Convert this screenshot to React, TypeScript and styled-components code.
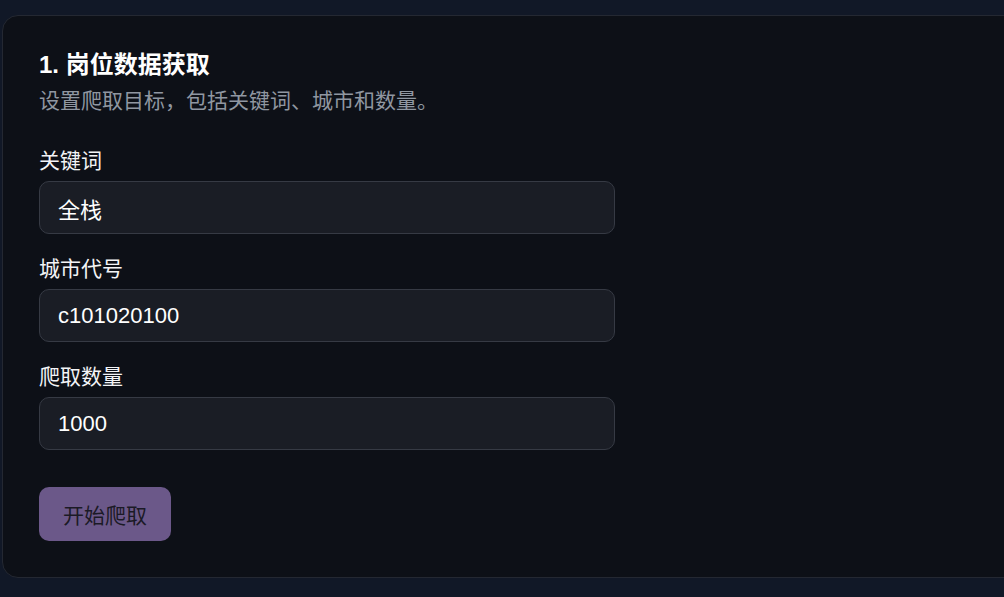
import styled, { createGlobalStyle } from 'styled-components';

const GlobalStyle = createGlobalStyle`
  html, body {
    margin: 0;
    padding: 0;
    background: #111827;
    overflow: hidden;
  }

  body {
    font-family: "Liberation Sans", "Noto Sans CJK SC", sans-serif;
    color: #f3f4f6;
  }
`;

const Page = styled.div`
  min-height: 597px;
  padding: 15px 0 0 2px;
  box-sizing: border-box;
`;

const Card = styled.section`
  width: 1040px;
  box-sizing: border-box;
  padding: 36px;
  background-color: #0d1017;
  border: 1px solid #242832;
  border-radius: 16px;
  display: flex;
  flex-direction: column;
`;

const Header = styled.header`
  display: flex;
  flex-direction: column;
  gap: 8px;
  margin-bottom: 31px;
`;

const Title = styled.h2`
  margin: 0;
  font-size: 24px;
  line-height: 26px;
  font-weight: 700;
  color: #ffffff;
`;

const Description = styled.p`
  margin: 0;
  font-size: 21px;
  line-height: 30px;
  color: #9097a1;
`;

const Fields = styled.div`
  display: flex;
  flex-direction: column;
  gap: 21px;
  width: 576px;
`;

const Field = styled.label`
  display: flex;
  flex-direction: column;
  gap: 6px;
`;

const Label = styled.span`
  font-size: 21px;
  line-height: 28px;
  color: #f3f4f6;
`;

const Input = styled.input`
  height: 53px;
  box-sizing: border-box;
  padding: 0 18px;
  font-family: "Liberation Sans", "Noto Sans CJK SC", sans-serif;
  font-size: 22px;
  color: #ffffff;
  background-color: #1a1d25;
  border: 1px solid #363a44;
  border-radius: 10px;
  outline: none;
`;

const Actions = styled.div`
  margin-top: 37px;
  display: flex;
`;

const Button = styled.button`
  height: 54px;
  padding: 0 24px;
  font-family: "Liberation Sans", "Noto Sans CJK SC", sans-serif;
  font-size: 21px;
  color: #1b1a26;
  background-color: #6b5889;
  border: none;
  border-radius: 10px;
  cursor: not-allowed;
`;

const fields = [
  { label: '关键词', value: '全栈' },
  { label: '城市代号', value: 'c101020100' },
  { label: '爬取数量', value: '1000' },
];

export default function App() {
  return (
    <>
      <GlobalStyle />
      <Page>
        <Card>
          <Header>
            <Title>1. 岗位数据获取</Title>
            <Description>设置爬取目标，包括关键词、城市和数量。</Description>
          </Header>
          <Fields>
            {fields.map((f) => (
              <Field key={f.label}>
                <Label>{f.label}</Label>
                <Input defaultValue={f.value} />
              </Field>
            ))}
          </Fields>
          <Actions>
            <Button disabled>开始爬取</Button>
          </Actions>
        </Card>
      </Page>
    </>
  );
}
